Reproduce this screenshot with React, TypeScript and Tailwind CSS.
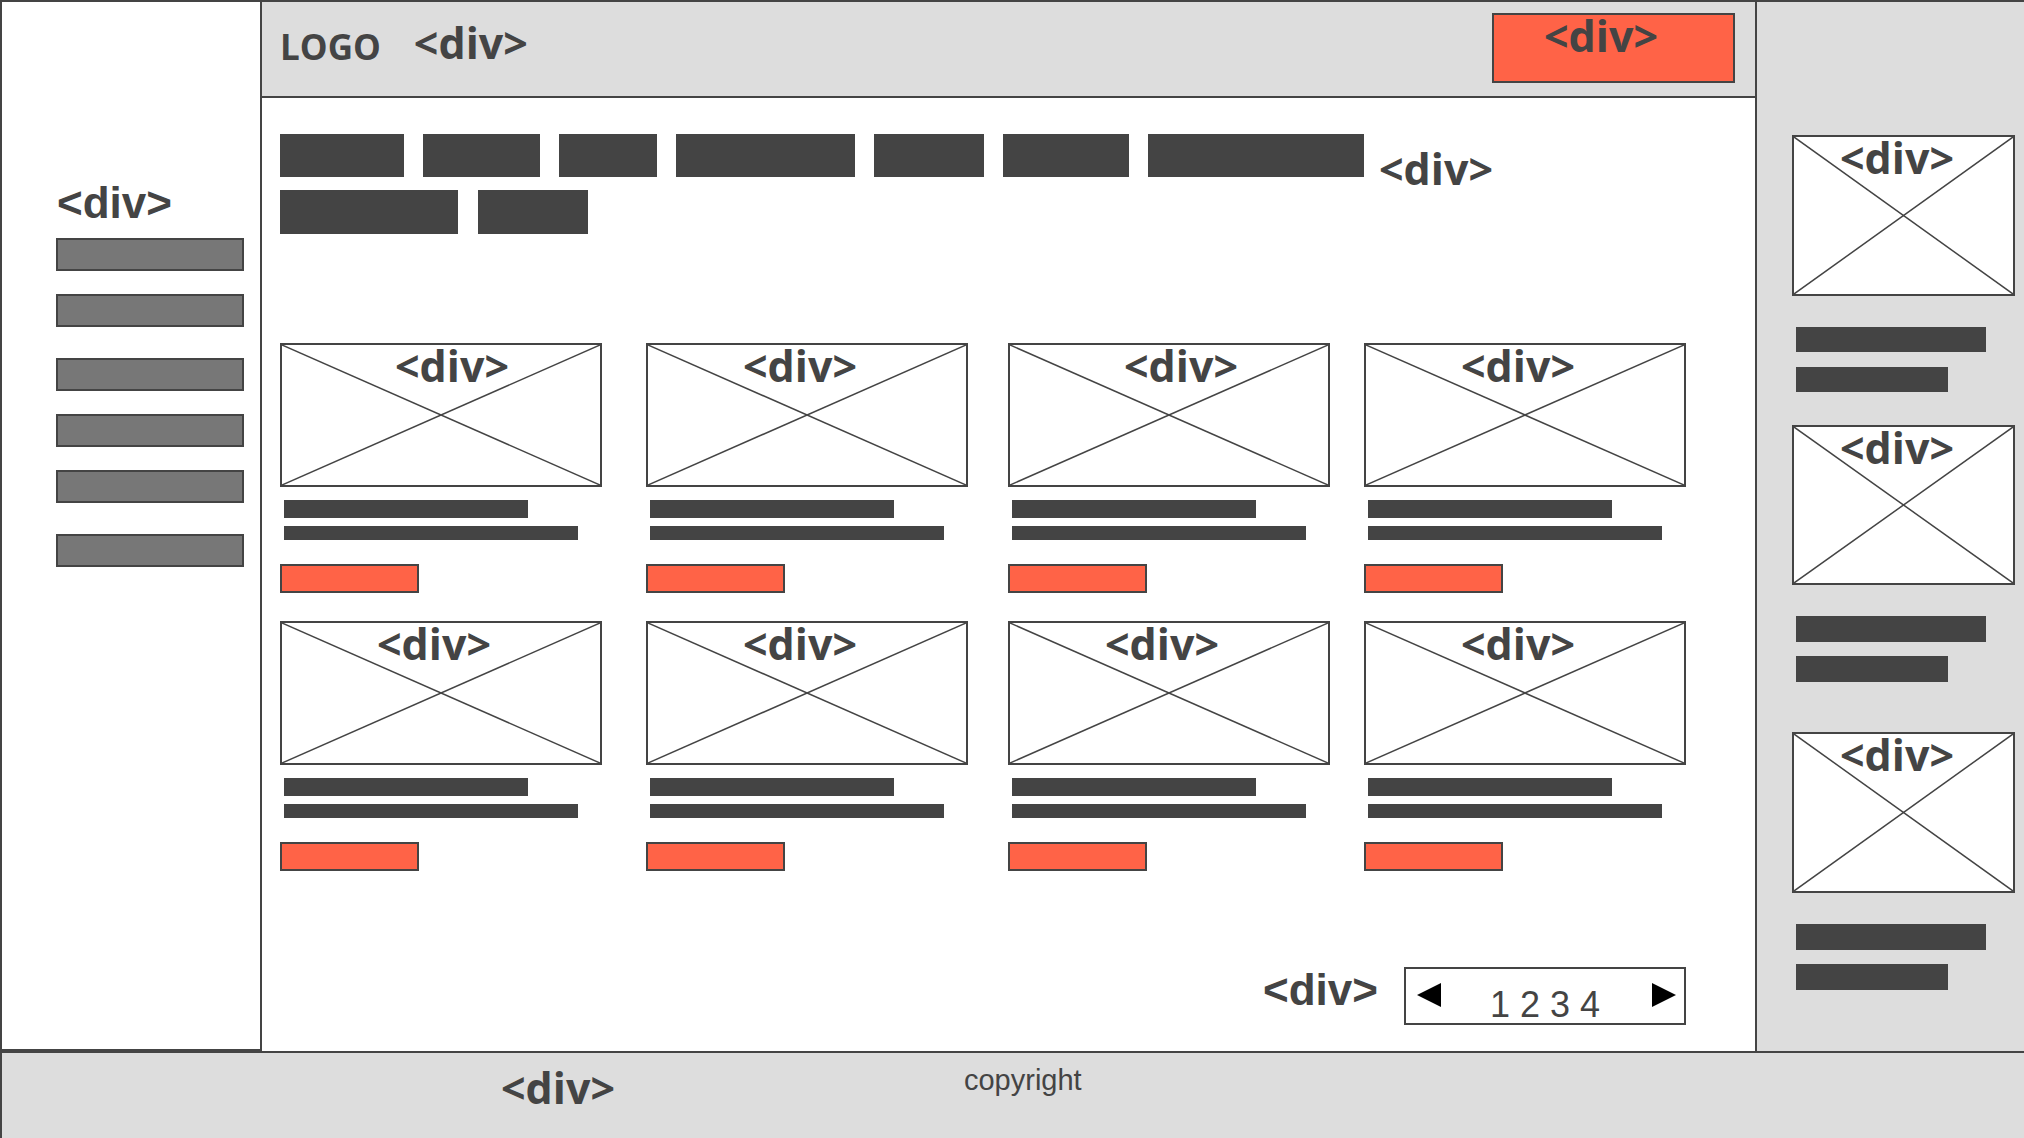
const dark = "bg-[#444]";

function Label({ className }: { className: string }) {
  return (
    <span
      className={
        "absolute top-[-1px] font-['Open_Sans',sans-serif] font-bold text-[43px] leading-none text-[#444] " +
        className
      }
    >
      &lt;div&gt;
    </span>
  );
}

function Placeholder({ className, labelClass }: { className: string; labelClass: string }) {
  return (
    <div className={"relative border-2 border-[#444] bg-white " + className}>
      <svg className="absolute inset-0 h-full w-full" viewBox="0 0 100 100" preserveAspectRatio="none">
        <line x1="0" y1="0" x2="100" y2="100" stroke="#444" strokeWidth="1.5" vectorEffect="non-scaling-stroke" />
        <line x1="100" y1="0" x2="0" y2="100" stroke="#444" strokeWidth="1.5" vectorEffect="non-scaling-stroke" />
      </svg>
      <Label className={labelClass} />
    </div>
  );
}

const gaps = ["", "ml-[44px]", "ml-[40px]", "ml-[34px]"];
const rows = [
  ["left-[113px]", "left-[95px]", "left-[114px]", "left-[95px]"],
  ["left-[95px]", "left-[95px]", "left-[95px]", "left-[95px]"],
];

function Card({ gap, labelClass }: { gap: string; labelClass: string }) {
  return (
    <div className={"w-[322px] " + gap}>
      <Placeholder className="h-[144px]" labelClass={labelClass} />
      <div className={"ml-[4px] mt-[13px] h-[18px] w-[244px] " + dark} />
      <div className={"ml-[4px] mt-[8px] h-[14px] w-[294px] " + dark} />
      <div className="mt-[24px] h-[29px] w-[139px] border-2 border-[#444] bg-[#ff6347]" />
    </div>
  );
}

function Arrow({ dir }: { dir: "left" | "right" }) {
  return (
    <svg width="24" height="24" viewBox="0 0 24 24" className="mt-[14px]">
      <polygon points={dir === "left" ? "24,0 0,12 24,24" : "0,0 24,12 0,24"} fill="#000" />
    </svg>
  );
}

export default function App() {
  const navTop = [124, 117, 98, 179, 110, 126, 216];
  const navBottom = [178, 110];

  return (
    <div className="flex h-[1138px] w-[2024px] flex-col overflow-hidden border-l-2 border-t-2 border-[#444] bg-white text-[#444]">
      <div className="flex h-[1049px]">
        {/* left sidebar */}
        <aside className="w-[260px] border-b-2 border-r-2 border-[#444] bg-white pl-[54px] pt-[179px]">
          <div className="ml-[1px] font-['Liberation_Sans',sans-serif] text-[44px] font-bold leading-none">&lt;div&gt;</div>
          {[13, 23, 31, 23, 23, 31].map((m, i) => (
            <div
              key={i}
              className="h-[33px] w-[188px] border-2 border-[#444] bg-[#777]"
              style={{ marginTop: m }}
            />
          ))}
        </aside>

        {/* main column */}
        <div className="flex w-[1493px] flex-col">
          <header className="flex h-[96px] items-start border-b-2 border-[#444] bg-[#ddd] pl-[18px] pr-[20px]">
            <div className="mt-[27px] font-['Open_Sans',sans-serif] text-[35px] font-bold leading-none">LOGO</div>
            <div className="ml-[33px] mt-[19px] font-['Open_Sans',sans-serif] text-[43px] font-bold leading-none">&lt;div&gt;</div>
            <div className="ml-auto mt-[11px] h-[70px] w-[243px] border-2 border-[#444] bg-[#ff6347] pl-[50px]">
              <div className="mt-[-1px] font-['Open_Sans',sans-serif] text-[43px] font-bold leading-none">&lt;div&gt;</div>
            </div>
          </header>

          <main className="flex-1 pl-[18px] pt-[36px]">
            <div className="flex h-[43px] items-start gap-[19px]">
              {navTop.map((w, i) => (
                <div key={i} className={"h-[43px] shrink-0 " + dark} style={{ width: w }} />
              ))}
              <div className="ml-[-4px] mt-[13px] font-['Open_Sans',sans-serif] text-[43px] font-bold leading-none">&lt;div&gt;</div>
            </div>
            <div className="mt-[13px] flex gap-[20px]">
              {navBottom.map((w, i) => (
                <div key={i} className={"h-[44px] " + dark} style={{ width: w }} />
              ))}
            </div>

            <div className="mt-[109px] flex flex-col gap-[28px]">
              {rows.map((labels, r) => (
                <div key={r} className="flex">
                  {labels.map((l, c) => (
                    <Card key={c} gap={gaps[c]} labelClass={l} />
                  ))}
                </div>
              ))}
            </div>

            <div className="mt-[96px] flex w-[1406px] items-start justify-end">
              <div className="mr-[26px] mt-[1px] font-['Liberation_Sans',sans-serif] text-[44px] font-bold leading-none">&lt;div&gt;</div>
              <div className="flex h-[58px] w-[282px] items-start border-2 border-[#444] bg-white pl-[11px] pr-[8px]">
                <Arrow dir="left" />
                <div className="ml-[49px] mt-[18px] font-['Liberation_Sans',sans-serif] text-[36px] leading-none">1 2 3 4</div>
                <div className="ml-auto">
                  <Arrow dir="right" />
                </div>
              </div>
            </div>
          </main>
        </div>

        {/* right sidebar */}
        <aside className="flex-1 border-l-2 border-[#444] bg-[#ddd] pl-[35px] pt-[133px]">
          <Placeholder className="h-[161px] w-[223px]" labelClass="left-[46px]" />
          <div className={"ml-[4px] mt-[31px] h-[25px] w-[190px] " + dark} />
          <div className={"ml-[4px] mt-[15px] h-[25px] w-[152px] " + dark} />
          <Placeholder className="mt-[33px] h-[160px] w-[223px]" labelClass="left-[46px]" />
          <div className={"ml-[4px] mt-[31px] h-[26px] w-[190px] " + dark} />
          <div className={"ml-[4px] mt-[14px] h-[26px] w-[152px] " + dark} />
          <Placeholder className="mt-[50px] h-[161px] w-[223px]" labelClass="left-[46px]" />
          <div className={"ml-[4px] mt-[31px] h-[26px] w-[190px] " + dark} />
          <div className={"ml-[4px] mt-[14px] h-[26px] w-[152px] " + dark} />
        </aside>
      </div>

      <footer className="flex flex-1 items-start border-t-2 border-[#444] bg-[#ddd] pl-[499px]">
        <div className="mt-[13px] font-['Open_Sans',sans-serif] text-[43px] font-bold leading-none">&lt;div&gt;</div>
        <div className="ml-[349px] mt-[13px] font-['Liberation_Sans',sans-serif] text-[29px] leading-none">copyright</div>
      </footer>
    </div>
  );
}
